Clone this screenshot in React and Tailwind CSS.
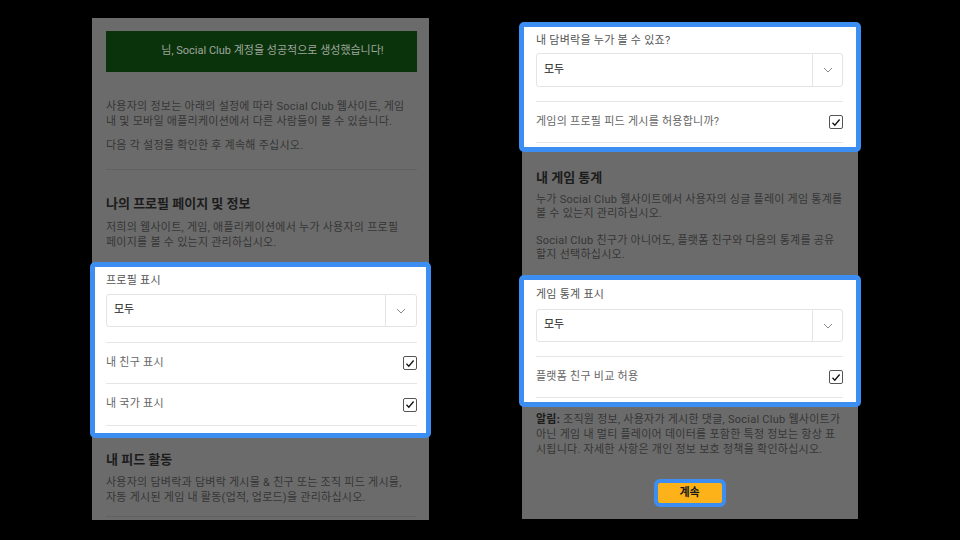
import React from 'react';

const font = { fontFamily: 'Roboto, "Noto Sans CJK KR", sans-serif' };

const Chevron = () => (
  <svg width="10" height="6" viewBox="0 0 10 6" fill="none">
    <path d="M1 1l4 4 4-4" stroke="#8a8a8a" strokeWidth="1" />
  </svg>
);

const Check = () => (
  <div className="w-[14px] h-[14px] border border-[#555] rounded-[2px] bg-white flex items-center justify-center">
    <svg width="10" height="9" viewBox="0 0 10 9" fill="none">
      <path d="M1.5 4.8l2.3 2.4L8.6 1.5" stroke="#111" strokeWidth="1.3" />
    </svg>
  </div>
);

const Select = ({ h, arrowW }) => (
  <div className={`flex border border-[#e4e4e4] rounded-[3px] bg-white ${h}`}>
    <div className="flex-1 flex items-center pl-[7px] text-[11px] text-[#222]">모두</div>
    <div className={`${arrowW} border-l border-[#e4e4e4] flex items-center justify-center`}>
      <Chevron />
    </div>
  </div>
);

const CheckRow = ({ label, h }) => (
  <div className={`flex items-center justify-between border-t border-[#e6e6e6] ${h}`}>
    <span className="text-[11px] tracking-[0.25px] text-[#666]">{label}</span>
    <Check />
  </div>
);

const body = 'text-[11px] tracking-[0.25px] text-[#363636]';
const head = 'text-[13px] leading-[16px] font-bold text-[#1c1c1c]';

export default function App() {
  return (
    <div className="w-[960px] h-[540px] bg-black flex items-start overflow-hidden whitespace-nowrap" style={font}>
      {/* left panel */}
      <div className="ml-[92px] mt-[18px] w-[337px] h-[502px] bg-[#6b6b6b] pl-[14px] pr-[12px] pt-[13px] flex flex-col">
        <div className="h-[41px] bg-[#0b330b] flex items-center justify-center text-[11px] text-[#9ea69e]">
          <span className="w-[22px]" />
          님, Social Club 계정을 성공적으로 생성했습니다!
        </div>
        <p className={`mt-[27px] leading-[15px] ${body}`}>
          사용자의 정보는 아래의 설정에 따라 Social Club 웹사이트, 게임
          <br />
          내 및 모바일 애플리케이션에서 다른 사람들이 볼 수 있습니다.
        </p>
        <p className={`mt-[9px] leading-[15px] ${body}`}>다음 각 설정을 확인한 후 계속해 주십시오.</p>
        <div className="mt-[16px] h-px bg-[#616161]" />
        <h3 className={`mt-[26px] ${head}`}>나의 프로필 페이지 및 정보</h3>
        <p className={`mt-[8px] leading-[15px] ${body}`}>
          저희의 웹사이트, 게임, 애플리케이션에서 누가 사용자의 프로필
          <br />
          페이지를 볼 수 있는지 관리하십시오.
        </p>

        <div className="mt-[12px] -ml-[16px] -mr-[14px] border-[5px] border-[#3d8ef2] rounded-[5px] bg-white pl-[11px] pr-[9px] pt-[6px] pb-[7px]">
          <div className="text-[11px] tracking-[0.25px] leading-[15px] text-[#555]">프로필 표시</div>
          <div className="mt-[6px]">
            <Select h="h-[33px]" arrowW="w-[31px]" />
          </div>
          <div className="mt-[15px]">
            <CheckRow label="내 친구 표시" h="h-[41px]" />
            <CheckRow label="내 국가 표시" h="h-[42px]" />
            <div className="border-t border-[#e6e6e6]" />
          </div>
        </div>

        <h3 className={`mt-[14px] ${head}`}>내 피드 활동</h3>
        <p className={`mt-[7px] leading-[15px] ${body}`}>
          사용자의 담벼락과 담벼락 게시물 &amp; 친구 또는 조직 피드 게시물,
          <br />
          자동 게시된 게임 내 활동(업적, 업로드)을 관리하십시오.
        </p>
        <div className="mt-[11px] h-px bg-[#616161]" />
      </div>

      {/* right panel */}
      <div className="ml-[93px] mt-[24px] w-[336px] h-[495px] bg-[#6b6b6b] pl-[14px] pr-[15px] flex flex-col">
        <div className="-mt-[2px] -ml-[17px] -mr-[18px] border-[5px] border-[#3d8ef2] rounded-[5px] bg-white pl-[12px] pr-[13px] pt-[6px] pb-[4px]">
          <div className="text-[11px] tracking-[0.25px] leading-[15px] text-[#555]">내 담벼락을 누가 볼 수 있죠?</div>
          <div className="mt-[5px]">
            <Select h="h-[34px]" arrowW="w-[30px]" />
          </div>
          <div className="mt-[14px]">
            <CheckRow label="게임의 프로필 피드 게시를 허용합니까?" h="h-[41px]" />
            <div className="border-t border-[#e6e6e6]" />
          </div>
        </div>

        <h3 className={`mt-[18px] ${head}`}>내 게임 통계</h3>
        <p className={`mt-[7px] leading-[14px] ${body}`}>
          누가 Social Club 웹사이트에서 사용자의 싱글 플레이 게임 통계를
          <br />
          볼 수 있는지 관리하십시오.
        </p>
        <p className={`mt-[13px] leading-[14px] ${body}`}>
          Social Club 친구가 아니어도, 플랫폼 친구와 다음의 통계를 공유
          <br />
          할지 선택하십시오.
        </p>

        <div className="mt-[13px] -ml-[17px] -mr-[18px] border-[5px] border-[#3d8ef2] rounded-[5px] bg-white pl-[12px] pr-[13px] pt-[7px] pb-[4px]">
          <div className="text-[11px] tracking-[0.25px] leading-[15px] text-[#555]">게임 통계 표시</div>
          <div className="mt-[7px]">
            <Select h="h-[33px]" arrowW="w-[30px]" />
          </div>
          <div className="mt-[14px]">
            <CheckRow label="플랫폼 친구 비교 허용" h="h-[41px]" />
            <div className="border-t border-[#e6e6e6]" />
          </div>
        </div>

        <p className={`mt-[5px] leading-[15px] ${body}`}>
          <b className="text-[#1c1c1c]">알림:</b> 조직원 정보, 사용자가 게시한 댓글, Social Club 웹사이트가
          <br />
          아닌 게임 내 멀티 플레이어 데이터를 포함한 특정 정보는 항상 표
          <br />
          시됩니다. 자세한 사항은 개인 정보 보호 정책을 확인하십시오.
        </p>

        <div className="mt-[22px] self-center border-[4px] border-[#3d8ef2] rounded-[6px]">
          <button className="w-[64px] h-[20px] bg-[#fdb21a] rounded-[2px] text-[11px] font-bold text-[#1a1a1a] flex items-center justify-center">
            계속
          </button>
        </div>
      </div>
    </div>
  );
}
